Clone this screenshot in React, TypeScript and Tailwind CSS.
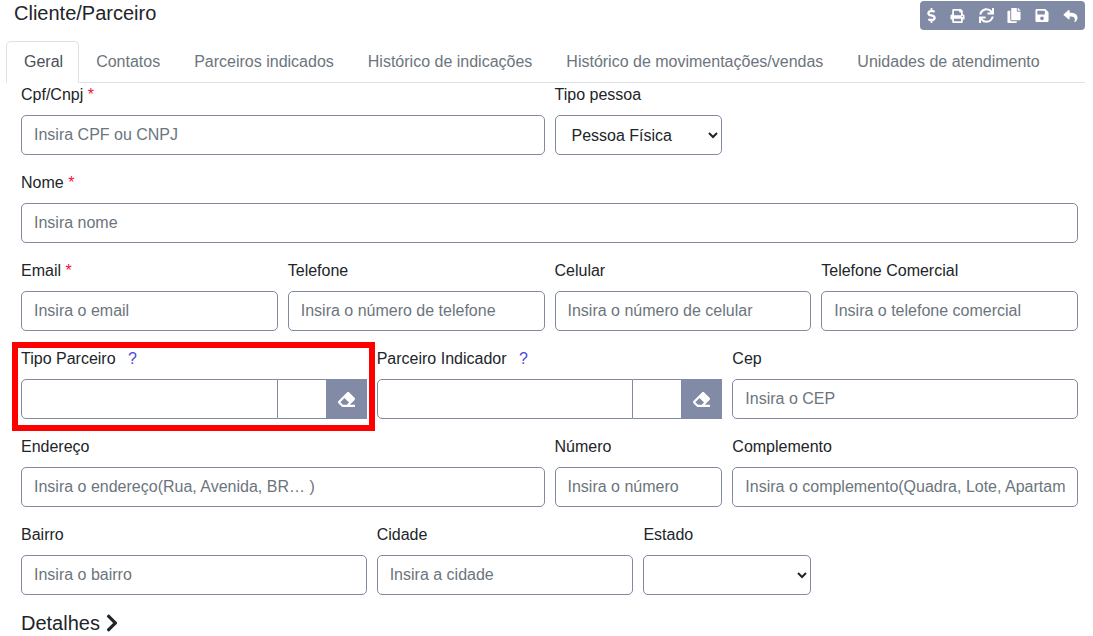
import { FaDollarSign, FaPrint, FaSync, FaCopy, FaSave, FaReply, FaEraser, FaChevronRight } from "react-icons/fa";

const inputCls = "h-10 w-full rounded-[5px] border border-[#8189a3] bg-white px-3 text-base text-[#212529] placeholder:text-[#6c757d] outline-none";
const selectCls = "h-10 w-full rounded-[5px] border border-[#8189a3] bg-white px-3 text-base text-[#212529] outline-none";

function Label({ text, required, help }: { text: string; required?: boolean; help?: boolean }) {
  return (
    <label className="mb-2 block h-6 text-base leading-6 text-[#212529]">
      {text}
      {required && <span className="text-[#f00f3c]"> *</span>}
      {help && <span className="ml-[12.5px] text-[#4f46d8]">?</span>}
    </label>
  );
}

function Field({ label, placeholder, required, className }: { label: string; placeholder: string; required?: boolean; className: string }) {
  return (
    <div className={className}>
      <Label text={label} required={required} />
      <input className={inputCls} placeholder={placeholder} />
    </div>
  );
}

function Lookup({ label, className, children }: { label: string; className: string; children?: React.ReactNode }) {
  return (
    <div className={className}>
      <Label text={label} help />
      <div className="flex h-10">
        <input className="h-10 min-w-0 flex-1 rounded-l-[5px] border border-[#8189a3] bg-white px-3 outline-none" />
        <div className="h-10 w-[48px] border-y border-[#8189a3] bg-white" />
        <button className="flex h-10 w-[41.17px] items-center justify-center bg-[#828ba6] text-white">
          <FaEraser size={17} />
        </button>
      </div>
      {children}
    </div>
  );
}

const tabs = ["Geral", "Contatos", "Parceiros indicados", "Histórico de indicações", "Histórico de movimentações/vendas", "Unidades de atendimento"];

export default function App() {
  return (
    <div className="h-[636px] w-[1093px] overflow-hidden bg-white font-['Liberation_Sans',sans-serif]">
      <div className="flex h-[41px] items-start justify-between pl-[14px] pr-2">
        <h1 className="text-xl leading-[26px] text-[#212529]">Cliente/Parceiro</h1>
        <div className="mt-px flex h-[29px] w-[165px] items-center justify-center gap-[13.7px] rounded-[4px] bg-[#828ba6] text-white">
          <FaDollarSign className="h-[15px] w-[9px]" />
          <FaPrint className="h-[14px] w-[15px]" />
          <FaSync className="h-[15px] w-[15px]" />
          <FaCopy className="h-[15px] w-[14px]" />
          <FaSave className="h-[15px] w-[14px]" />
          <FaReply className="h-[14px] w-[15px]" />
        </div>
      </div>
      <div className="ml-1.5 mr-2 flex h-[42px] border-b border-[#dee2e6]">
        {tabs.map((t, i) => (
          <div
            key={t}
            className={
              i === 0
                ? "h-[42px] rounded-t-[5px] border border-[#dee2e6] border-b-white bg-white pl-[17px] pr-[15px] pt-2 text-base leading-6 text-[#495057]"
                : "h-[41px] px-[17px] pt-[9px] text-base leading-6 text-[#6c757d]"
            }
          >
            {t}
          </div>
        ))}
      </div>
      <div className="grid grid-cols-12 gap-x-[10px] gap-y-4 pl-[21px] pr-[15px]">
        <Field className="col-span-6" label="Cpf/Cnpj" required placeholder="Insira CPF ou CNPJ" />
        <div className="col-span-2">
          <Label text="Tipo pessoa" />
          <select className={selectCls} defaultValue="f">
            <option value="f">Pessoa Física</option>
          </select>
        </div>
        <div className="col-span-4" />

        <Field className="col-span-12" label="Nome" required placeholder="Insira nome" />

        <Field className="col-span-3" label="Email" required placeholder="Insira o email" />
        <Field className="col-span-3" label="Telefone" placeholder="Insira o número de telefone" />
        <Field className="col-span-3" label="Celular" placeholder="Insira o número de celular" />
        <Field className="col-span-3" label="Telefone Comercial" placeholder="Insira o telefone comercial" />

        <Lookup className="relative col-span-4" label="Tipo Parceiro">
          <div className="pointer-events-none absolute -bottom-3 -left-[9px] -right-2 -top-[5px] border-[6px] border-[#ff0000]" />
        </Lookup>
        <Lookup className="col-span-4" label="Parceiro Indicador" />
        <Field className="col-span-4" label="Cep" placeholder="Insira o CEP" />

        <Field className="col-span-6" label="Endereço" placeholder="Insira o endereço(Rua, Avenida, BR… )" />
        <Field className="col-span-2" label="Número" placeholder="Insira o número" />
        <Field className="col-span-4" label="Complemento" placeholder="Insira o complemento(Quadra, Lote, Apartamento)" />

        <Field className="col-span-4" label="Bairro" placeholder="Insira o bairro" />
        <Field className="col-span-3" label="Cidade" placeholder="Insira a cidade" />
        <div className="col-span-2">
          <Label text="Estado" />
          <select className={selectCls} />
        </div>
      </div>
      <div className="mt-4 flex items-center gap-[2px] pl-[21px] text-xl leading-6 text-[#212529]">
        Detalhes <FaChevronRight size={20} />
      </div>
    </div>
  );
}
